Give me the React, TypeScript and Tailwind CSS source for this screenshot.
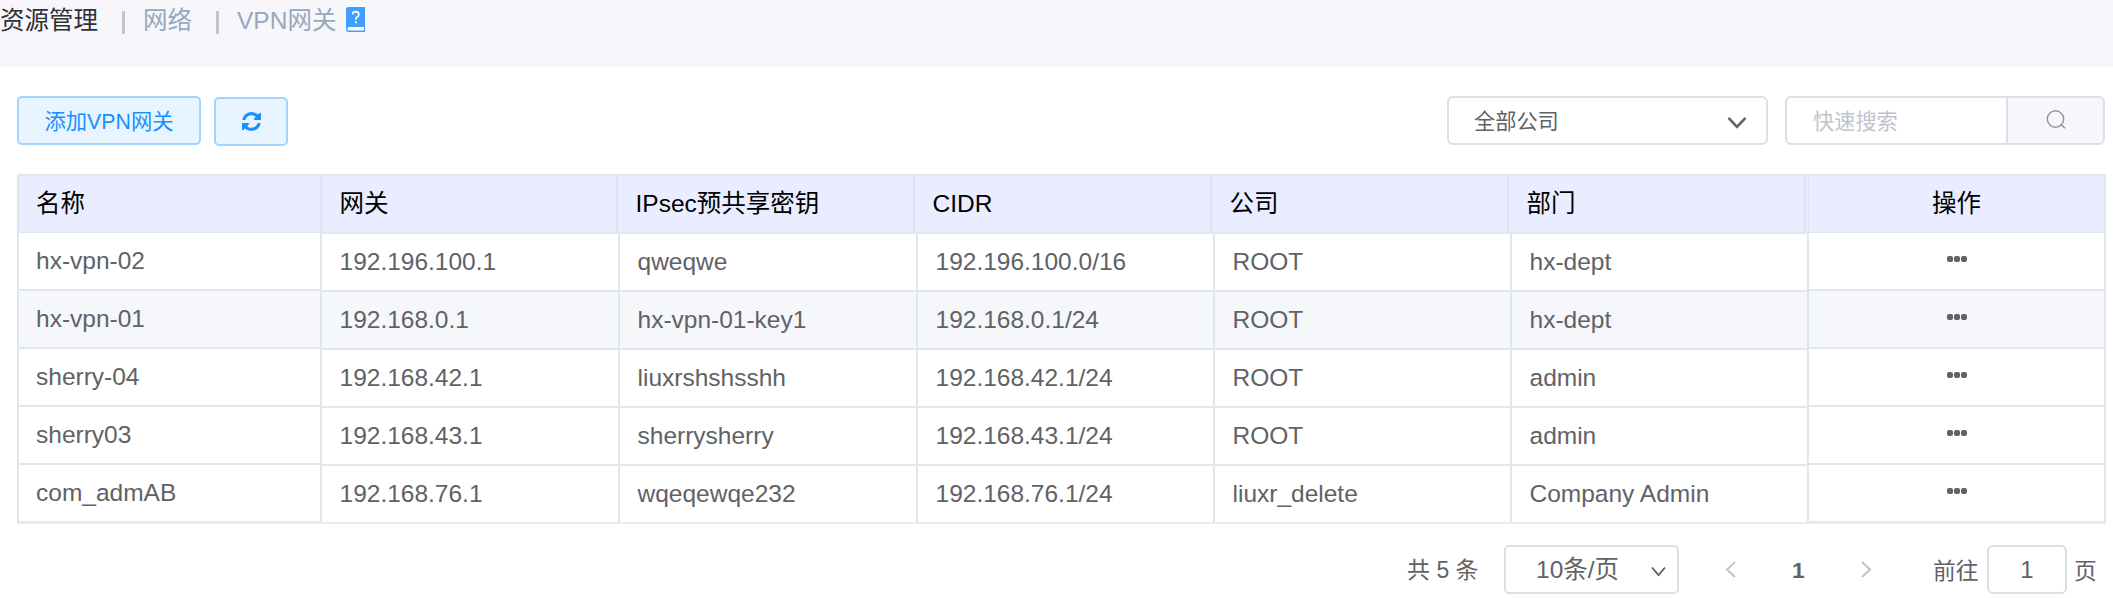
import React from "react";

type Gateway = {
  name: string;
  gateway: string;
  key: string;
  cidr: string;
  company: string;
  dept: string;
};

const rows: Gateway[] = [
  { name: "hx-vpn-02", gateway: "192.196.100.1", key: "qweqwe", cidr: "192.196.100.0/16", company: "ROOT", dept: "hx-dept" },
  { name: "hx-vpn-01", gateway: "192.168.0.1", key: "hx-vpn-01-key1", cidr: "192.168.0.1/24", company: "ROOT", dept: "hx-dept" },
  { name: "sherry-04", gateway: "192.168.42.1", key: "liuxrshshsshh", cidr: "192.168.42.1/24", company: "ROOT", dept: "admin" },
  { name: "sherry03", gateway: "192.168.43.1", key: "sherrysherry", cidr: "192.168.43.1/24", company: "ROOT", dept: "admin" },
  { name: "com_admAB", gateway: "192.168.76.1", key: "wqeqewqe232", cidr: "192.168.76.1/24", company: "liuxr_delete", dept: "Company Admin" },
];

const headCell = "border-r-2 border-[#e0e5ec] pl-[17.5px] flex items-center text-black";
const bodyCell = "border-r-2 border-[#dfe6ec] pl-[17.5px] flex items-center";

function stripe(i: number) {
  return i === 1 ? "bg-[#f5f7fa]" : "bg-white";
}

function sideRule(i: number) {
  return i === rows.length - 1 ? "h-[57px] border-b border-[#dfe6ec]" : "h-[58px] border-b-2 border-[#dfe6ec]";
}

function HelpBook() {
  return (
    <svg className="ml-[9px] mt-[7px] h-[25px] w-[19px]" viewBox="0 0 19 25">
      <path d="M2.5 0H19V25H3Q0 25 0 22V2.5Q0 0 2.5 0Z" fill="#409eff" />
      <path d="M18 20H3Q1.4 20 1.4 21.8Q1.4 23.6 3 23.6H18Z" fill="#fff" />
      <path d="M6.6 7.2Q6.8 4.7 9.8 4.7Q12.8 4.7 12.8 7.4Q12.8 9 11.2 10Q9.8 11 9.8 12.8" fill="none" stroke="#fff" strokeWidth="1.7" />
      <rect x="8.9" y="14.3" width="1.9" height="1.9" fill="#fff" />
    </svg>
  );
}

function Refresh() {
  return (
    <svg className="h-[19px] w-[19px]" viewBox="0 0 1536 1536" fill="#1890ff">
      <path d="M1511 928q0 5-1 7-64 268-268 434.500T764 1536q-146 0-282.500-55T238 1324l-129 129q-19 19-45 19t-45-19-19-45V960q0-26 19-45t45-19h448q26 0 45 19t19 45-19 45l-137 137q71 66 161 102t187 36q134 0 250-65t186-179q11-17 53-117 8-23 30-23h192q13 0 22.500 9.500t9.500 22.500zm25-800v448q0 26-19 45t-45 19h-448q-26 0-45-19t-19-45 19-45l138-138Q969 256 768 256q-134 0-250 65T332 500q-11 17-53 117-8 23-30 23H50q-13 0-22.500-9.500T18 608v-7q65-268 270-434.500T768 0q146 0 284 55.500T1297 212l130-129q19-19 45-19t45 19 19 45z" />
    </svg>
  );
}

export default function App() {
  return (
    <div className="h-[598px] w-[2113px] overflow-hidden bg-white font-['Liberation_Sans','Noto_Sans_CJK_SC',sans-serif] text-[24.5px] leading-[30px] text-[#606266]">
      <header className="flex h-[67px] items-start bg-[#f6f6fb] text-[#97a8be]">
        <span className="mt-[6px] w-[98px] whitespace-nowrap text-[#303133]">资源管理</span>
        <span className="ml-6 mt-[11px] h-[23px] w-[3px] bg-[#c0c4cc]" />
        <span className="ml-[18px] mt-[6px] w-[49px] whitespace-nowrap">网络</span>
        <span className="ml-6 mt-[11px] h-[23px] w-[3px] bg-[#c0c4cc]" />
        <span className="ml-[18px] mt-[6px] w-[100px] whitespace-nowrap">VPN网关</span>
        <HelpBook />
      </header>

      <div className="mt-[29px] flex items-start pl-[17px] text-[21.2px]">
        <button className="flex h-[49px] w-[184px] items-center justify-center whitespace-nowrap rounded-[5px] border-2 border-[#a3d3ff] bg-[#e8f4ff] pt-0.5 text-[21.3px] text-[#1890ff]">
          添加VPN网关
        </button>
        <button className="ml-[13px] mt-px flex h-[49px] w-[74px] items-center justify-center rounded-[5px] border-2 border-[#a3d3ff] bg-[#e8f4ff]">
          <Refresh />
        </button>
        <div className="ml-[1159px] flex h-[49px] w-[321px] items-center justify-between rounded-[6px] border-2 border-[#dcdfe6] pl-[25px] pr-[19px]">
          <span className="pt-[3px]">全部公司</span>
          <svg className="mt-[3px] h-[13px] w-5" viewBox="0 0 20 13">
            <path d="M1.5 1.8L10 10.8L18.500 1.8" fill="none" stroke="#606266" strokeWidth="2.6" />
          </svg>
        </div>
        <div className="ml-[17px] flex h-[49px] w-[320px] overflow-hidden rounded-[6px] border-2 border-[#dcdfe6]">
          <div className="flex w-[219px] items-center pl-[26px] pt-[3px] text-[#c0c4cc]">快速搜索</div>
          <div className="flex flex-1 justify-center border-l-2 border-[#dcdfe6] bg-[#f5f7fa] pt-3">
            <svg className="h-[19px] w-5" viewBox="0 0 20 19" fill="none" stroke="#909399" strokeWidth="1.4">
              <circle cx="9.500" cy="9" r="8.200" />
              <path d="M15 14.500L19 18.300" />
            </svg>
          </div>
        </div>
      </div>

      <div className="ml-[17px] mt-[28px] flex h-[350px] w-[2089px] border-2 border-[#dfe6ec] border-b-[#e6ebf5]">
        <div className="w-[303px]">
          <div className="flex h-[57px] items-center border-b border-r-2 border-[#dfe6ec] bg-[#e9edff] pl-[17px] text-black">名称</div>
          {rows.map((r, i) => (
            <div key={r.name} className={`flex items-center border-r-2 pl-[17px] ${sideRule(i)} ${stripe(i)}`}>{r.name}</div>
          ))}
        </div>
        <div className="w-[1487px]">
          <div className="grid h-[58px] grid-cols-[296px_297px_297px_297px_297px_3px] border-b-2 border-[#dfe6ec] bg-[#e9edff]">
            <div className={headCell}>网关</div>
            <div className={headCell}>IPsec预共享密钥</div>
            <div className={headCell}>CIDR</div>
            <div className={headCell}>公司</div>
            <div className={headCell}>部门</div>
            <div className="border-r border-[#e0e5ec]" />
          </div>
          {rows.map((r, i) => (
            <div
              key={r.name}
              className={`grid grid-cols-[298px_298px_297px_297px_297px] ${i === rows.length - 1 ? "h-[56px]" : "h-[58px] border-b-2 border-[#dfe6ec]"} ${stripe(i)}`}
            >
              <div className={bodyCell}>{r.gateway}</div>
              <div className={bodyCell}>{r.key}</div>
              <div className={bodyCell}>{r.cidr}</div>
              <div className={bodyCell}>{r.company}</div>
              <div className={bodyCell}>{r.dept}</div>
            </div>
          ))}
        </div>
        <div className="flex-1">
          <div className="flex h-[57px] items-center justify-center border-b border-[#dfe6ec] bg-[#e9edff] text-black">操作</div>
          {rows.map((r, i) => (
            <div key={r.name} className={`flex items-start justify-center gap-px pt-[23px] ${sideRule(i)} ${stripe(i)}`}>
              <i className="h-1.5 w-1.5 rounded-[2px] bg-[#606266]" />
              <i className="h-1.5 w-1.5 rounded-[2px] bg-[#606266]" />
              <i className="h-1.5 w-1.5 rounded-[2px] bg-[#606266]" />
            </div>
          ))}
        </div>
      </div>

      <div className="mt-[21px] flex h-[49px] items-center whitespace-nowrap pl-[1407px] text-[22.75px]">
        <span className="w-[72px] text-[23px]">共 5 条</span>
        <div className="ml-[25px] flex h-[49px] w-[175px] items-center rounded-[5px] border-2 border-[#dcdfe6] pl-[30px] pt-px text-[24.5px]">
          <span className="w-[82px]">10条/页</span>
          <svg className="ml-[33px] mt-[2px] h-[11px] w-[15px]" viewBox="0 0 15 11">
            <path d="M1 1.500L7.500 9L14 1.500" fill="none" stroke="#606266" strokeWidth="1.9" />
          </svg>
        </div>
        <svg className="ml-[46px] h-[17px] w-[11px]" viewBox="0 0 11 17">
          <path d="M10 1L2 8.500L10 16" fill="none" stroke="#c0c4cc" strokeWidth="2" />
        </svg>
        <span className="ml-[56px] w-[14px] font-bold text-[#606266]">1</span>
        <svg className="ml-[55px] h-[17px] w-[11px]" viewBox="0 0 11 17">
          <path d="M1 1L9 8.500L1 16" fill="none" stroke="#c0c4cc" strokeWidth="2" />
        </svg>
        <span className="ml-[61px] mt-0.5 w-[46px]">前往</span>
        <div className="ml-[8px] flex h-[49px] w-[80px] items-center justify-center rounded-[6px] border-2 border-[#dcdfe6] text-[24px]">1</div>
        <span className="ml-[7px] mt-0.5">页</span>
      </div>
    </div>
  );
}
